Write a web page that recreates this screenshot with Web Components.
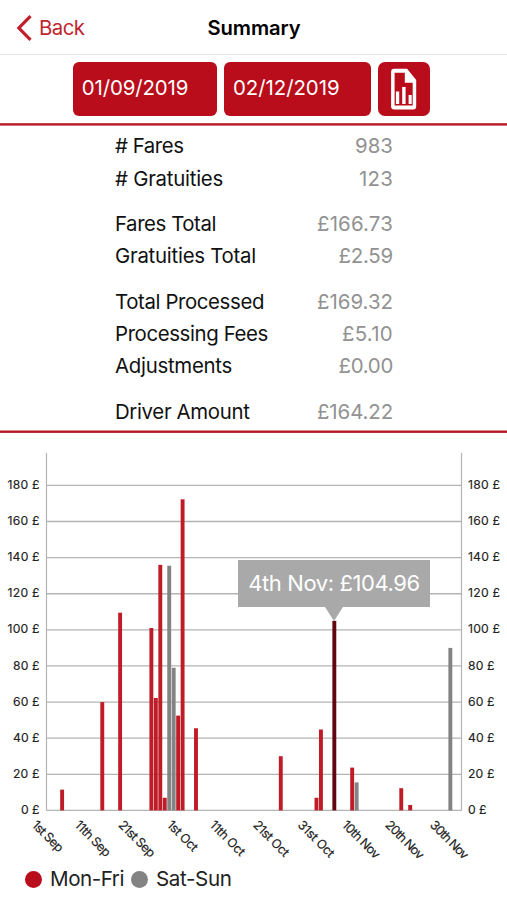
<!DOCTYPE html>
<html lang="en">
<head>
<meta charset="utf-8">
<title>Summary</title>
<style>
body{margin:0;background:#fff;font-family:Inter,"Liberation Sans",sans-serif}
</style>
</head>
<body>
<summary-page></summary-page>
<script>
// Text whose tracking adapts to a given width.
class FitText extends HTMLElement {
  connectedCallback() {
    const text = this.textContent;
    this.attachShadow({mode:'open'}).innerHTML =
      '<style>:host{display:inline-block;white-space:nowrap}span{display:inline-block}</style><span><slot></slot></span>';
    const span = this.shadowRoot.querySelector('span');
    const target = +this.getAttribute('w');
    const natural = span.getBoundingClientRect().width;
    span.style.letterSpacing = (target - natural) / text.length + 'px';
  }
}

class NavBar extends HTMLElement {
  connectedCallback() {
    this.attachShadow({mode:'open'}).innerHTML = `
    <style>
      :host{display:grid;grid-template-columns:1fr auto 1fr;align-items:center;height:54px;border-bottom:1px solid #e6e6e6;box-sizing:content-box}
      .back{display:flex;align-items:center;gap:6px;padding-left:16px;color:#c1272f;font-size:20.4px;line-height:24px;margin-top:2px}
      .title{font-size:20.2px;font-weight:600;color:#000;line-height:24px;margin:2px 0 0 1px}
      svg{display:block}
    </style>
    <div class="back"><svg width="17" height="26" viewBox="0 0 17 26"><path d="M14.5 1.2 2.9 13l11.6 11.8" fill="none" stroke="#bf1e2a" stroke-width="3.2"/></svg><fit-text w="45.5">${this.getAttribute('back')}</fit-text></div>
    <div class="title"><fit-text w="93">${this.getAttribute('heading')}</fit-text></div><div></div>`;
  }
}

class DateBox extends HTMLElement {
  connectedCallback() {
    this.attachShadow({mode:'open'}).innerHTML = `
    <style>:host{display:flex;align-items:center;box-sizing:border-box;height:53.5px;border-radius:6px;background:#b90d1b;color:#fff;font-size:20.4px;padding:0 0 1.6px 9px}</style>
    <fit-text w="106.5">${this.getAttribute('value')}</fit-text>`;
  }
}

class ReportButton extends HTMLElement {
  connectedCallback() {
    this.attachShadow({mode:'open'}).innerHTML = `
    <style>:host{display:block;height:53.5px;border-radius:7px;background:#b90d1b}svg{display:block}</style>
    <svg width="51" height="53" viewBox="0.4 0 51 53">
      <path fill="#fff" fill-rule="evenodd" d="M16.5 6.8H29.5L38.6 18V44.5Q38.6 47.5 35.6 47.5H16.5Q13.5 47.5 13.5 44.5V9.8Q13.5 6.8 16.5 6.8ZM17 10.7V43.6H35.1V20.8H27.2V10.7Z"/>
      <path fill="#fff" d="M18.3 29.4h3.3v12.6h-3.3zM24.6 25h3.4v17h-3.4zM31 33h3.1v9H31z"/>
    </svg>`;
  }
}

class SummaryRow extends HTMLElement {
  connectedCallback() {
    this.attachShadow({mode:'open'}).innerHTML = `
    <style>:host{display:flex;justify-content:space-between;align-items:center;height:32.3px;font-size:20.4px;color:#111}
    :host([gap]){margin-top:13.2px}.v{color:#929292}</style>
    <fit-text w="${this.getAttribute('lw')}">${this.getAttribute('label')}</fit-text>
    <fit-text class="v" w="${this.getAttribute('vw')}">${this.getAttribute('value')}</fit-text>`;
  }
}

class FareChart extends HTMLElement {
  connectedCallback() {
    const top = 434, zero = 810.4 - top, unit = 1.8055, left = 46.5, right = 461.5, step = (right - left) / 93;
    const bars = [[3,11.5],[12,60],[16,109.5],[23,101],[24,62.3],[25,136],[26,7],[27,135.5,1],[28,79,1],[29,52.5],[30,172.3],[33,45.5],[52,30],[60,7],[61,44.8],[64,105,2],[68,23.7],[69,15.5,1],[79,12.3],[81,3],[90,90,1]];
    const fills = ['#bf1c27','#838383','#640611'];
    let s = '';
    for (let v = 0; v <= 180; v += 20) {
      const y = zero - v * unit;
      s += `<path d="M${left} ${y}H${right}" stroke="#b4b4b4" stroke-width="1.3"/>`;
      const w = v >= 100 ? 32 : v ? 26.5 : 18.5;
      s += `<text x="${39.5 - w}" y="${y + 3.6}" textLength="${w}">${v} £</text><text x="468" y="${y + 3.6}" textLength="${w}">${v} £</text>`;
    }
    s += `<path d="M${left} 19V${zero}M${right} 19V${zero}" stroke="#b4b4b4" stroke-width="1.2"/>`;
    for (const [d, v, k] of bars)
      s += `<rect x="${left + (d + .5) * step - 1.95}" y="${zero - v * unit}" width="3.9" height="${v * unit}" fill="${fills[k || 0]}"/>`;
    const ticks = [['1st Sep',31.2,38.5],['11th Sep',74,45],['21st Sep',117.8,46],['1st Oct',166.3,37.5],['11th Oct',209,44],['21st Oct',252.4,45],['31st Oct',297,46],['10th Nov',341.3,47.5],['20th Nov',384.6,48.5],['30th Nov',429.3,48.5]];
    for (const [t, x, w] of ticks)
      s += `<text class="tick" transform="translate(${x} ${825.8 - top}) rotate(45)" textLength="${w}">${t}</text>`;
    this.attachShadow({mode:'open'}).innerHTML = `
    <style>
      :host{display:block;position:relative;height:430px}
      svg{display:block}text{fill:#222;font-size:12.2px;stroke:#222;stroke-width:.15px}.tick{font-size:12.6px}
      .tip{position:absolute;left:238px;top:126px;width:192px;height:47px;box-sizing:border-box;padding-bottom:1.5px;background:#a9a9a9;color:#fff;font-size:22px;display:flex;align-items:center;justify-content:center}
      .tip::after{content:"";position:absolute;left:87px;top:100%;border:9px solid transparent;border-top:14px solid #a9a9a9;border-bottom:0}
    </style>
    <svg width="507" height="430" viewBox="0 0 507 430">${s}</svg>
    <div class="tip"><fit-text w="171.5">4th Nov: £104.96</fit-text></div>`;
  }
}

class LegendItem extends HTMLElement {
  connectedCallback() {
    this.attachShadow({mode:'open'}).innerHTML = `
    <style>:host{display:flex;align-items:center;gap:8px;font-size:20.6px;line-height:24px;color:#222}
    i{width:17px;height:17px;border-radius:50%;background:var(--dot)}</style>
    <i></i><fit-text w="${this.getAttribute('w')}">${this.getAttribute('label')}</fit-text>`;
  }
}

class SummaryPage extends HTMLElement {
  connectedCallback() {
    this.attachShadow({mode:'open'}).innerHTML = `
    <style>
      :host{display:block;width:507px;height:900px;overflow:hidden;background:#fff}
      .dates{display:grid;grid-template-columns:144px 147.3px 51.4px;gap:7.2px;box-sizing:border-box;padding:7px 0 0 72.8px;height:68px}
      .rule{display:block}
      .rows{box-sizing:border-box;height:304px;padding:3.7px 114px 0 115px}
      .legend{display:flex;gap:7px;padding-left:25px;margin-top:3px}
    </style>
    <nav-bar back="Back" heading="Summary"></nav-bar>
    <div class="dates"><date-box value="01/09/2019"></date-box><date-box value="02/12/2019"></date-box><report-button></report-button></div>
    <svg class="rule" width="507" height="3"><rect y=".2" width="507" height="2.4" fill="#b91824"/></svg>
    <div class="rows">
      <summary-row label="# Fares" lw="68.5" value="983" vw="38"></summary-row>
      <summary-row label="# Gratuities" lw="108" value="123" vw="34"></summary-row>
      <summary-row gap label="Fares Total" lw="101" value="£166.73" vw="76"></summary-row>
      <summary-row label="Gratuities Total" lw="141" value="£2.59" vw="54.5"></summary-row>
      <summary-row gap label="Total Processed" lw="149" value="£169.32" vw="76"></summary-row>
      <summary-row label="Processing Fees" lw="153" value="£5.10" vw="51"></summary-row>
      <summary-row label="Adjustments" lw="117" value="£0.00" vw="54.5"></summary-row>
      <summary-row gap label="Driver Amount" lw="134.5" value="£164.22" vw="76"></summary-row>
    </div>
    <svg class="rule" width="507" height="4"><rect y=".5" width="507" height="2.4" fill="#b91824"/></svg>
    <fare-chart></fare-chart>
    <div class="legend"><legend-item label="Mon-Fri" w="74" style="--dot:#b90d1b"></legend-item><legend-item label="Sat-Sun" w="75.5" style="--dot:#838383"></legend-item></div>`;
  }
}
customElements.define('fit-text', FitText);
customElements.define('nav-bar', NavBar);
customElements.define('date-box', DateBox);
customElements.define('report-button', ReportButton);
customElements.define('summary-row', SummaryRow);
customElements.define('fare-chart', FareChart);
customElements.define('legend-item', LegendItem);
customElements.define('summary-page', SummaryPage);
</script>
</body>
</html>
